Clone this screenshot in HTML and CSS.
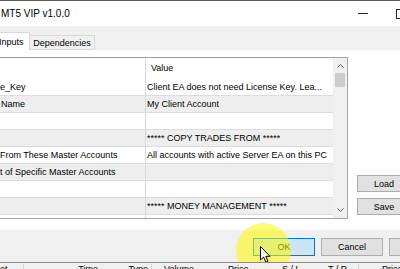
FILE: index.html
```html
<!doctype html>
<html>
<head>
<meta charset="utf-8">
<title>MT5 VIP v1.0.0</title>
<link rel="stylesheet" href="styles.css">
</head>
<body>
<div class="dialog">
	<div class="titlebar">
		<span class="title">MT5 VIP v1.0.0</span>
		<span class="winbtn min"><i></i></span>
		<span class="winbtn max"><i></i></span>
	</div>
	<div class="tabs">
		<span class="tab active">Inputs</span>
		<span class="tab">Dependencies</span>
	</div>
	<div class="pane">
		<div class="list">
			<div class="rows">
				<div class="row head"><span class="c1"></span><span class="c2">Value</span></div>
				<div class="row"><span class="c1">e_Key</span><span class="c2">Client EA does not need License Key. Lea...</span></div>
				<div class="row alt"><span class="c1 in">Name</span><span class="c2">My Client Account</span></div>
				<div class="row"><span class="c1"></span><span class="c2"></span></div>
				<div class="row alt"><span class="c1"></span><span class="c2">***** COPY TRADES FROM *****</span></div>
				<div class="row"><span class="c1">From These Master Accounts</span><span class="c2">All accounts with active Server EA on this PC</span></div>
				<div class="row alt"><span class="c1">t of Specific Master Accounts</span><span class="c2"></span></div>
				<div class="row"><span class="c1"></span><span class="c2"></span></div>
				<div class="row alt"><span class="c1"></span><span class="c2">***** MONEY MANAGEMENT *****</span></div>
				<div class="row"><span class="c1"></span><span class="c2"></span></div>
			</div>
			<div class="vscroll">
				<span class="arrow"><svg width="7" height="4" viewBox="0 0 7 4"><polyline points="0.5,3.5 3.5,0.5 6.5,3.5" fill="none" stroke="#606060" stroke-width="1"/></svg></span>
				<span class="thumb"></span>
				<span class="track"></span>
				<span class="arrow"><svg width="7" height="4" viewBox="0 0 7 4"><polyline points="0.5,0.5 3.5,3.5 6.5,0.5" fill="none" stroke="#606060" stroke-width="1"/></svg></span>
			</div>
		</div>
		<div class="side">
			<button class="btn">Load</button>
			<button class="btn">Save</button>
		</div>
	</div>
	<div class="footer">
		<button class="btn ok">OK</button>
		<button class="btn">Cancel</button>
		<button class="btn">Reset</button>
	</div>
	<div class="spot"></div>
	<svg class="cursor" width="12" height="18" viewBox="0 0 12 18"><path d="M0.5 0.5 L0.5 14 L3.6 11 L5.9 16.3 L8 15.4 L5.8 10.3 L10 10.3 Z" fill="#fff" stroke="#000" stroke-width="1" stroke-linejoin="round"/></svg>
</div>
<div class="terminal">
	<span class="h h1">et</span>
	<span class="h h2">Time</span>
	<span class="h h3">Type</span>
	<span class="h h4">Volume</span>
	<span class="h h5">Price</span>
	<span class="h h6">S / L</span>
	<span class="h h7">T / P</span>
	<span class="h h8">Price</span>
</div>
</body>
</html>
```
FILE: styles.css
```css
body { margin: 0; width: 400px; height: 269px; overflow: hidden; background: #f0f0f0; font: 9px "Liberation Sans", Arial, sans-serif; color: #000; }
.dialog { position: relative; width: 420px; height: 262px; box-sizing: border-box; overflow: hidden; border-top: 1px solid #5b5b5b; }

/* title bar */
.titlebar { height: 25px; background: #fff; display: flex; align-items: center; }
.title { font-size: 10px; padding-left: 1px; }
.winbtn { width: 38px; height: 25px; flex: none; display: flex; align-items: center; justify-content: center; }
.winbtn.min { margin-left: auto; }
.winbtn.min i { width: 10px; height: 1px; background: #222; }
.winbtn.max i { width: 8px; height: 8px; border: 1px solid #222; }

/* tabs */
.tabs { height: 24px; display: flex; align-items: flex-end; }
.tab { display: flex; align-items: center; box-sizing: border-box; flex: none; }
.tab.active { height: 18px; width: 31px; margin-left: -1px; background: #fff; border-top: 1px solid #d9d9d9; border-right: 1px solid #d9d9d9; padding-top: 1px; }
.tab:not(.active) { height: 15px; width: 65px; padding: 0 4px; justify-content: center; border: 1px solid #d9d9d9; border-left: none; background: #f0f0f0; }

/* inputs pane */
.pane { height: 180px; background: #fff; padding-top: 7px; box-sizing: border-box; display: flex; align-items: flex-start; }
.list { width: 348px; height: 162px; flex: none; box-sizing: border-box; border: 1px solid #a3a3a3; border-left: none; display: flex; }
.rows { width: 333px; overflow: hidden; }
.row { display: flex; height: 16px; border-bottom: 1px solid #dcdcdc; line-height: 16px; white-space: nowrap; }
.row.head { height: 21px; line-height: 21px; border-bottom: none; }
.row.alt { background: #eeeeee; }
.c1 { width: 145px; flex: none; border-right: 1px solid #d8d8d8; overflow: hidden; }
.c1.in { padding-left: 1px; box-sizing: border-box; width: 146px; }
.c2 { padding-left: 1px; overflow: hidden; }
.head .c2 { padding-left: 5px; }

.vscroll { width: 14px; background: #f0f0f0; display: flex; flex-direction: column; align-items: center; }
.arrow { height: 16px; display: flex; align-items: center; justify-content: center; }
.arrow:first-child { height: 15px; padding-top: 1px; box-sizing: border-box; }
.thumb { width: 10px; height: 14px; background: #cdcdcd; flex: none; }
.track { flex: 1; }

.side { margin: 118px 0 0 9px; display: flex; flex-direction: column; gap: 6px; }
.btn { font: inherit; color: #000; height: 18px; padding: 0; flex: none; background: #e1e1e1; border: 1px solid #adadad; box-sizing: border-box; }
.side .btn { width: 54px; height: 17px; }

/* bottom buttons */
.footer { height: 32px; display: flex; gap: 6px; padding: 8px 0 0 253px; box-sizing: border-box; }
.footer .btn { width: 62px; }
.footer .ok { background: #cce4f7; border-color: #0078d7; }

/* click highlight and pointer */
.spot { position: absolute; left: 236px; top: 222px; width: 55px; height: 55px; border-radius: 50%; background: rgba(255, 249, 0, 0.55); }
.cursor { position: absolute; left: 260px; top: 245px; }

/* terminal list header behind */
.terminal { height: 7px; border-top: 1px solid #8e8e8e; display: flex; white-space: nowrap; padding-top: 1px; }
.h { display: block; box-sizing: border-box; overflow: hidden; flex: none; }
.h1 { width: 24px; border-right: 1px solid #d4d4d4; }
.h2 { width: 77px; text-align: right; padding-right: 3px; }
.h3 { width: 51px; text-align: right; padding-right: 3px; border-right: 1px solid #d4d4d4; }
.h4 { width: 59px; padding-left: 12px; }
.h5 { width: 60px; padding-left: 17px; }
.h6 { width: 50px; padding-left: 11px; }
.h7 { width: 38px; padding-left: 7px; border-right: 1px solid #d4d4d4; }
.h8 { width: 60px; padding-left: 23px; }
```
